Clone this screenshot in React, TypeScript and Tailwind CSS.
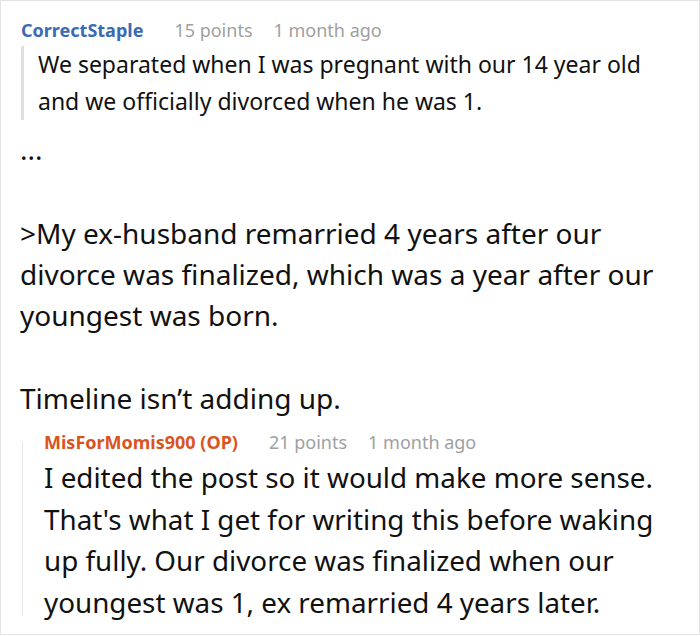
const font = { fontFamily: '"Noto Sans", "Open Sans", sans-serif' }

function Meta({ name, color, points, time }: { name: string; color: string; points: string; time: string }) {
  return (
    <div className="flex items-baseline text-[18px] leading-[20px] whitespace-nowrap">
      <span className={`font-bold ${color}`}>{name}</span>
      <span className="ml-[31px] text-[#a0a0a0]">{points}</span>
      <span className="ml-[21px] text-[#a0a0a0]">{time}</span>
    </div>
  )
}

export default function App() {
  return (
    <div style={font} className="w-[700px] h-[635px] bg-white border border-[#e3e3e3] overflow-hidden text-[#111] whitespace-nowrap">
      <div className="pl-[20px] pt-[19px]">
        <Meta name="CorrectStaple" color="text-[#3a6ab5]" points="15 points" time="1 month ago" />
      </div>

      <div className="ml-[20px] mt-[6px] border-l-[3px] border-[#e0e0e0] pl-[14px] text-[23px] leading-[37px]">
        <p>We separated when I was pregnant with our 14 year old</p>
        <p>and we officially divorced when he was 1.</p>
      </div>

      <div className="pl-[19px] mt-[9px] text-[28px] leading-[41px]">
        <p>...</p>
        <p className="mt-[43px]">&gt;My ex-husband remarried 4 years after our</p>
        <p>divorce was finalized, which was a year after our</p>
        <p>youngest was born.</p>
        <p className="mt-[42px]">Timeline isn’t adding up.</p>
      </div>

      <div className="ml-[21px] mt-[23px] flex flex-col border-l border-[#e6e6e6] pl-[21px]">
        <div className="-mt-[10px]">
          <Meta name="MisForMomis900 (OP)" color="text-[#d9541e]" points="21 points" time="1 month ago" />
        </div>
        <div className="mt-[5px] -mb-[8px] text-[27.8px] leading-[41.5px]">
          <p>I edited the post so it would make more sense.</p>
          <p>That's what I get for writing this before waking</p>
          <p>up fully. Our divorce was finalized when our</p>
          <p>youngest was 1, ex remarried 4 years later.</p>
        </div>
      </div>
    </div>
  )
}
